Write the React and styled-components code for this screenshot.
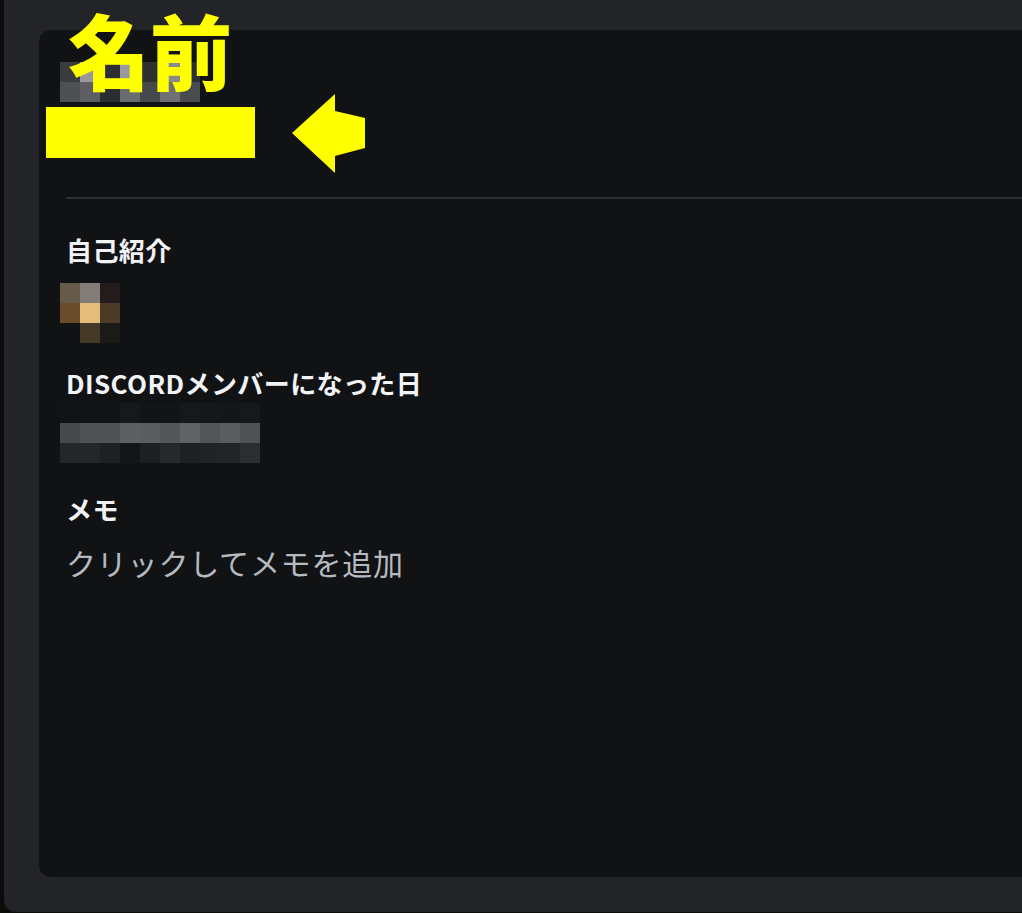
import React from "react";
import styled, { createGlobalStyle } from "styled-components";

const Global = createGlobalStyle`
  html, body { margin: 0; padding: 0; background: #0c0c0b; overflow: hidden; }
  body { font-family: "Noto Sans CJK JP", "Noto Sans", sans-serif; }
  * { box-sizing: border-box; }
`;

const Page = styled.div`
  position: relative;
  width: 1022px;
  height: 913px;
  padding-left: 4px;
`;

const Frame = styled.div`
  height: 912px;
  background: #232428;
  border-bottom-left-radius: 12px;
  padding: 30px 0 35px 35px;
  display: flex;
`;

const Card = styled.div`
  flex: 1;
  background: #111214;
  border-radius: 12px 0 0 12px;
  padding: 32px 0 0 27px;
  display: flex;
  flex-direction: column;
`;

const Mosaic = styled.div`
  display: grid;
  grid-template-columns: repeat(${(p) => p.$cols}, 20px);
  grid-auto-rows: 20px;
  margin-left: -6px;
  margin-top: ${(p) => p.$top || 0}px;
`;

const Cell = styled.div`
  background: ${(p) => p.$c};
`;

const Redaction = styled.div`
  width: 209px;
  height: 51px;
  margin: 5px 0 0 -20px;
  background: #ffff00;
`;

const Divider = styled.div`
  height: 2px;
  margin-top: 39px;
  background: #2e2f34;
`;

const Heading = styled.h2`
  margin: ${(p) => p.$top}px 0 0;
  font-size: 26px;
  line-height: 32px;
  font-weight: 700;
  color: #f2f3f5;
  letter-spacing: 0.4px;
`;

const Placeholder = styled.div`
  margin-top: 18px;
  font-size: 30px;
  line-height: 38px;
  font-weight: 400;
  color: #b5bac1;
  letter-spacing: 0.8px;
`;

const NameLabel = styled.div`
  position: absolute;
  left: 68px;
  top: 0;
  font-size: 82px;
  line-height: 98px;
  font-weight: 900;
  color: #ffff00;
  white-space: nowrap;
`;

const Arrow = styled.svg`
  position: absolute;
  left: 292px;
  top: 94px;
`;

const nameCells = [
  "#3a3b3f", "#98989c", "#2e2f33", "#9a9a9e", "#2f3034", "#8a8a8d", "#2d2e32",
  "#4f5054", "#5d5e62", "#2c2d31", "#6a6b6e", "#47484c", "#707073", "#4a4b4f",
];

const bioCells = [
  "#665a4b", "#837c77", "#241b1c",
  "#6a4e2c", "#e4bd7b", "#4a3a27",
  "transparent", "#453a27", "#1b1a16",
];

const dateCells = [
  "#121315", "#121315", "#121315", "#17181a", "#131416", "#131416", "#17181a", "#161719", "#151618", "#17181a",
  "#47484c", "#505155", "#505155", "#5e5f63", "#5c5d61", "#545559", "#616266", "#535458", "#5b5c60", "#505155",
  "#25262a", "#25262a", "#1f2023", "#141517", "#1e1f22", "#27282c", "#1f2023", "#222327", "#232428", "#2c2d31",
];

function Pixels({ cells, cols, top }) {
  return (
    <Mosaic $cols={cols} $top={top}>
      {cells.map((c, i) => (
        <Cell key={i} $c={c} />
      ))}
    </Mosaic>
  );
}

export default function App() {
  return (
    <Page>
      <Global />
      <Frame>
        <Card>
          <Pixels cells={nameCells} cols={7} />
          <Redaction />
          <Divider />
          <Heading $top={35}>自己紹介</Heading>
          <Pixels cells={bioCells} cols={3} top={17} />
          <Heading $top={24}>DISCORDメンバーになった日</Heading>
          <Pixels cells={dateCells} cols={10} top={4} />
          <Heading $top={30}>メモ</Heading>
          <Placeholder>クリックしてメモを追加</Placeholder>
        </Card>
      </Frame>
      <NameLabel>名前</NameLabel>
      <Arrow width="74" height="80" viewBox="0 0 74 80">
        <polygon points="0,39 43,0 43,17 73,24 73,54 43,62 43,79" fill="#ffff00" />
      </Arrow>
    </Page>
  );
}
